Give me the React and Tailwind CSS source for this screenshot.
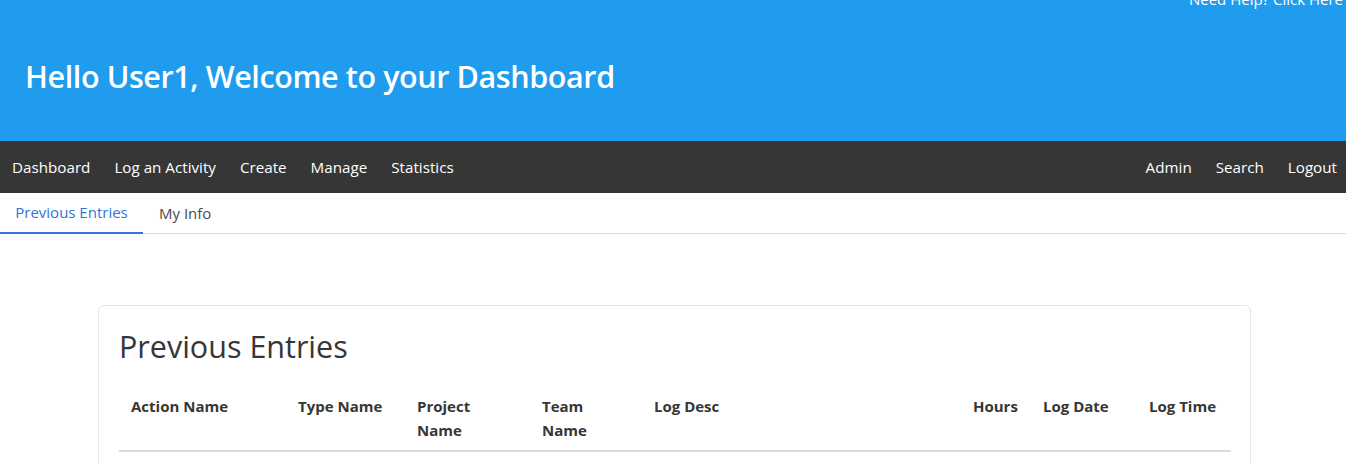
const navLeft = ["Dashboard", "Log an Activity", "Create", "Manage", "Statistics"];
const navRight = ["Admin", "Search", "Logout"];

const columns = [
  { label: "Action Name", w: "w-[167px]" },
  { label: "Type Name", w: "w-[119px]" },
  { label: "Project Name", w: "w-[125px]" },
  { label: "Team Name", w: "w-[112px]" },
  { label: "Log Desc", w: "w-[319px]" },
  { label: "Hours", w: "w-[70px]" },
  { label: "Log Date", w: "w-[106px]" },
  { label: "Log Time", w: "w-[94px]" },
];

const App = () => {
  return (
    <div className="min-h-screen bg-white font-['Open_Sans',sans-serif] text-[#333] overflow-hidden">
      {/* Header */}
      <header className="relative h-[141px] bg-[#209cee] text-white">
        <a className="absolute right-[3px] top-[-12px] text-[15px] whitespace-nowrap">
          Need Help? Click Here
        </a>
        <h1 className="pl-[25px] pt-[56px] text-[30.5px] font-semibold leading-[40px] tracking-[-0.4px]">
          Hello User1, Welcome to your Dashboard
        </h1>
      </header>

      {/* Main nav */}
      <nav className="flex h-[52px] items-center justify-between bg-[#363636] pl-3 pr-[9px] text-[15.2px] text-white">
        <div className="flex gap-[24px]">
          {navLeft.map((item) => (
            <a key={item} className="cursor-pointer">
              {item}
            </a>
          ))}
        </div>
        <div className="flex gap-[24px]">
          {navRight.map((item) => (
            <a key={item} className="cursor-pointer">
              {item}
            </a>
          ))}
        </div>
      </nav>

      {/* Tabs */}
      <div className="flex h-[41px] border-b border-[#dbdbdb] text-[15px]">
        <a className="-mb-px flex w-[143px] items-center justify-center border-b-2 border-[#3273dc] text-[#3273dc]">
          Previous Entries
        </a>
        <a className="flex items-center px-4 text-[#4a4a4a]">My Info</a>
      </div>

      {/* Card */}
      <div className="ml-[98px] mr-[95px] mt-[71px] rounded-md border border-[#e5e5e5] px-5 pt-[20px] pb-10">
        <h2 className="text-[30.5px] font-medium leading-[40px] text-[#363636]">Previous Entries</h2>
        <table className="mt-[28px] w-full table-fixed border-collapse text-[15px]">
          <thead>
            <tr className="border-b-2 border-[#dbdbdb]">
              {columns.map((c) => (
                <th
                  key={c.label}
                  className={`${c.w} px-3 pb-[8px] text-left align-top font-bold leading-[24px] text-[#363636]`}
                >
                  {c.label}
                </th>
              ))}
            </tr>
          </thead>
          <tbody />
        </table>
      </div>
    </div>
  );
};

export default App;
